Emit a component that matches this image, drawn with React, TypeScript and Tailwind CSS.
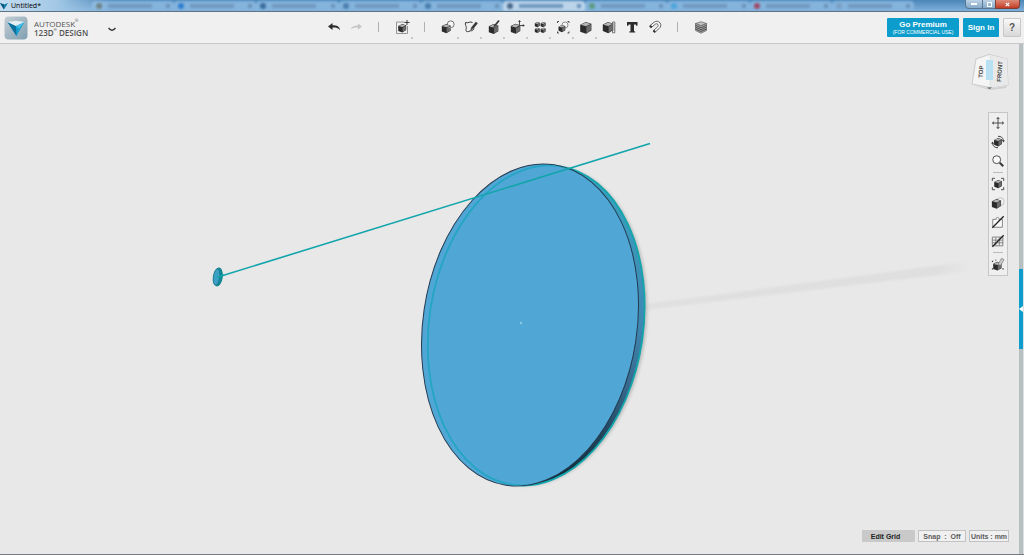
import React from 'react';

interface IconProps {
    children: React.ReactNode;
    size?: 'md' | 'sm';
}

const Icon: React.FC<IconProps> = ({ children, size = 'md' }) => (
    <svg viewBox="0 0 16 16" className={size === 'md' ? 'size-4 shrink-0' : 'size-3.5 shrink-0'} fill="none" stroke="#3a3a3a" aria-hidden="true">
        {children}
    </svg>
);

// Isometric box, about 10x10, with its top left corner at x, y
const Cube: React.FC<{ x: number; y: number; scale?: number }> = ({ x, y, scale = 1 }) => (
    <g transform={`translate(${x} ${y}) scale(${scale})`} stroke="none">
        <path d="M0 2.4 5 0l5 1.6v6L5.2 10.6 0 8.6z" fill="#2b2b2b" />
        <path d="M.5 2.5 5 .5l4.3 1.3-4.1 2z" fill="#b5b5b5" />
        <path d="M5.5 4.3 9.6 2.2v5.2l-4.1 2.6z" fill="#6b6b6b" />
    </g>
);

const icons = {
    undo: (
        <Icon>
            <path d="M2 7.5 6.5 4v2.2c4.5 0 7 1 7.5 5C12 8.7 9.5 8.5 6.5 8.600V11z" fill="#2d2d2d" stroke="none" />
        </Icon>
    ),
    redo: (
        <Icon>
            <path d="M14 7.5 10 4.5v2C6 6.500 3.500 7.500 3 10.5c1.500-1.700 4-2.200 7-2.100v2.300z" fill="#c6c6c6" stroke="none" />
        </Icon>
    ),
    insert: (
        <Icon>
            <path d="M10.500 3H2.500v11.500H13.500V7" stroke="#8a8a8a" strokeWidth=".9" />
            <Cube x={4.200} y={5} scale={0.8} />
            <path d="M13 1v5M10.500 3.500h5" strokeWidth="1" />
        </Icon>
    ),
    primitives: (
        <Icon>
            <circle cx="10.700" cy="5.300" r="3.400" fill="#f6f6f6" stroke="#666" strokeWidth=".9" />
            <Cube x={1.800} y={5} scale={0.88} />
            <path d="M7.500 6.300c.6 2 2.500 2.800 4 2.300" stroke="#bbb" strokeWidth=".8" />
        </Icon>
    ),
    sketch: (
        <Icon>
            <path d="M9.500 3.500C7 2 5.500 4.500 2.500 3.500c-.8 2.500 1 3.500.8 5 0 1.500-.8 2.500.2 4 1.500.8 3-.8 5-.8 1.500-.2 2-1 2.500-2.200" strokeWidth="1" />
            <path d="m9 9.500 4.800-6" strokeWidth="2.600" />
            <path d="m7.500 11.500.4-2.700 1.900 1.500z" fill="#3a3a3a" stroke="none" />
        </Icon>
    ),
    construct: (
        <Icon>
            <Cube x={2.800} y={5} scale={0.95} />
            <path d="m9 6.500 4-5" strokeWidth="1.800" />
            <path d="m7.500 8.300.6-2.800 1.900 1.500z" fill="#333" stroke="none" />
        </Icon>
    ),
    modify: (
        <Icon>
            <Cube x={1.800} y={4.800} scale={0.95} />
            <path d="M10.500 2v4.500H15M10.500 6.500 8 8.500" strokeWidth=".9" />
            <path d="m9 3 1.500-2L12 3zM13.800 5l2 1.500-2 1.500z" fill="#3a3a3a" stroke="none" />
        </Icon>
    ),
    pattern: (
        <Icon>
            <Cube x={2.800} y={3} scale={0.5} />
            <Cube x={8.600} y={3} scale={0.5} />
            <Cube x={2.800} y={8.800} scale={0.5} />
            <Cube x={8.600} y={8.800} scale={0.5} />
        </Icon>
    ),
    grouping: (
        <Icon>
            <circle cx="10" cy="6" r="3" fill="#f6f6f6" stroke="#777" strokeWidth=".8" />
            <Cube x={3.500} y={6} scale={0.68} />
            <path d="M2.500 4V2.500H4M12.500 2.500H14V4M2.500 12.500V14H4M12.500 14H14v-1.500" strokeWidth=".9" />
        </Icon>
    ),
    combine: (
        <Icon>
            <Cube x={2.200} y={3} scale={1.120} />
        </Icon>
    ),
    measure: (
        <Icon>
            <Cube x={1.800} y={3} scale={1.050} />
            <path d="M11.500 3h2.300v10.800h-2.300zM12 5h1.500M12 7h1.500M12 9h1.500M12 11h1.500" fill="#f3f3f3" stroke="#555" strokeWidth=".8" />
        </Icon>
    ),
    text: (
        <Icon>
            <path d="M3 3h10.500v3.800h-1.200l-.6-1.300H10v6.700l1.200.4v1H5.300v-1l1.200-.4V5.500H4.800l-.6 1.300H3z" fill="#2b2b2b" stroke="none" />
        </Icon>
    ),
    snap: (
        <Icon>
            <g stroke="#555" strokeWidth=".9">
                <path d="M2.500 7 7 3.300c2-1.600 4.700-1.300 6 .5 1.300 1.900 1 4.200-.8 5.700L7.500 13.700 6 12l4.500-4.100c1.800-1.700-.3-4.200-2.200-2.700L3.900 8.900z" fill="#f8f8f8" />
                <path d="m2.500 7 1.400 1.900 1.400-1.200L3.900 5.900zM6 12l1.500 1.700 1.300-1.200-1.500-1.700z" fill="#333" stroke="none" />
            </g>
        </Icon>
    ),
    material: (
        <Icon>
            <path d="M2.500 4.500 8 2.700l5.500 1.800L8 6.800z" fill="#c4c4c4" stroke="#666" strokeWidth=".7" />
            <path d="M2.500 4.500 8 6.800l5.500-2.300v7L8 14.300l-5.500-2.800z" fill="#a8a8a8" stroke="#555" strokeWidth=".6" />
            <path d="M2.500 6.300 8 8.800l5.500-2.500M2.500 8.200 8 10.700l5.500-2.500M2.500 10 8 12.500l5.500-2.500" stroke="#444" strokeWidth=".9" />
        </Icon>
    ),
    pan: (
        <Icon size="sm">
            <path d="M8 2v12M2 8h12M6.500 3.500 8 1.500l1.500 2M6.500 12.500 8 14.500l1.500-2M3.500 6.500 1.500 8l2 1.500M12.500 6.500l2 1.500-2 1.500" strokeWidth="1" />
        </Icon>
    ),
    orbit: (
        <Icon size="sm">
            <Cube x={3.500} y={3.500} scale={0.9} />
            <path d="M8 1.500c3.500-.3 5.800 1.700 6.200 5M8 14.500c-3.500.3-5.800-1.700-6.200-5" strokeWidth="1.100" />
            <path d="m12.300 6 1.900 2.500L15.800 6zM3.700 10 1.800 7.500.2 10z" fill="#3a3a3a" stroke="none" />
        </Icon>
    ),
    zoom: (
        <Icon size="sm">
            <circle cx="6.500" cy="6.500" r="4.500" fill="#fafafa" strokeWidth="1" />
            <path d="m10 10 4 4" strokeWidth="2.400" />
        </Icon>
    ),
    fit: (
        <Icon size="sm">
            <Cube x={3.700} y={3.500} scale={0.88} />
            <path d="M1.500 4.500v-3h3M11.500 1.500h3v3M1.500 11.500v3h3M11.500 14.500h3v-3" strokeWidth="1" />
        </Icon>
    ),
    shading: (
        <Icon size="sm">
            <circle cx="10.500" cy="6.500" r="4.500" fill="#f4f4f4" stroke="#aaa" strokeWidth=".8" />
            <Cube x={1} y={3.500} scale={1.050} />
        </Icon>
    ),
    hideSolids: (
        <Icon size="sm">
            <path d="M2 5h4c-1-3 4-3 3 0h4v9H2z" fill="#fafafa" stroke="#777" strokeWidth="1" />
            <path d="M1.500 14.500 14.500 1.500" stroke="#222" strokeWidth="1.500" />
        </Icon>
    ),
    hideSketches: (
        <Icon size="sm">
            <path d="M1.500 3.500h12v10h-12zM1.500 7h12M1.500 10h12M5.500 4v9M9.500 4v9" stroke="#777" strokeWidth="1" />
            <path d="M1.500 14.500 14.500 1.500" stroke="#222" strokeWidth="1.500" />
        </Icon>
    ),
    snapshot: (
        <Icon size="sm">
            <Cube x={2.500} y={5.500} scale={0.95} />
            <path d="m8 8.500 4-7L15 3l-4 6.500z" fill="#ccc" stroke="#777" strokeWidth=".8" />
            <path d="M1 5h1.500M5 3.500h1M1 13.500h1.500M13 13.500h1.500" strokeWidth="1.400" />
        </Icon>
    ),
};

type IconName = keyof typeof icons;

interface Tool {
    id: IconName;
    label: string;
    menu?: boolean;
}

const mainTools: Tool[] = [
    { id: 'primitives', label: 'Primitives', menu: true },
    { id: 'sketch', label: 'Sketch', menu: true },
    { id: 'construct', label: 'Construct', menu: true },
    { id: 'modify', label: 'Modify', menu: true },
    { id: 'pattern', label: 'Pattern', menu: true },
    { id: 'grouping', label: 'Grouping', menu: true },
    { id: 'combine', label: 'Combine', menu: true },
    { id: 'measure', label: 'Measure' },
    { id: 'text', label: 'Text' },
    { id: 'snap', label: 'Snap' },
];

const viewTools: Tool[][] = [
    [
        { id: 'pan', label: 'Pan' },
        { id: 'orbit', label: 'Orbit' },
        { id: 'zoom', label: 'Zoom' },
    ],
    [
        { id: 'fit', label: 'Fit' },
        { id: 'shading', label: 'Shading' },
        { id: 'hideSolids', label: 'Hide solids' },
        { id: 'hideSketches', label: 'Hide sketches' },
    ],
    [{ id: 'snapshot', label: 'Materials' }],
];

const browserTabs = [
    { icon: 'bg-[#5e6f6a]', active: false },
    { icon: 'bg-[#2f7fd0]', active: false },
    { icon: 'bg-[#3a6c9c]', active: false },
    { icon: 'bg-[#4a7fae]', active: false },
    { icon: 'bg-[#4a7fae]', active: false },
    { icon: 'bg-[#4d6a8c]', active: true },
    { icon: 'bg-[#5c9c84]', active: false },
    { icon: 'bg-[#4ba6dc]', active: false },
    { icon: 'bg-[#a04a68]', active: false },
    { icon: 'bg-[#7ba0c4]', active: false },
];

const ToolButton: React.FC<{ tool: Tool; className?: string }> = ({ tool, className = 'w-[23px]' }) => (
    <button type="button" aria-label={tool.label} className={`relative flex h-full items-center justify-center ${className}`}>
        {icons[tool.id]}
        {tool.menu && <span className="absolute right-0 bottom-0.5 size-0.5 bg-[#c8c8c8]" />}
    </button>
);

const Separator = () => (
    <div className="flex w-[23px] justify-center">
        <span className="h-2.5 w-px bg-[#b0b0b0]" />
    </div>
);

const TitleBar = () => (
    <div className="relative flex h-3 items-start overflow-hidden border-b border-[#5d7487] bg-linear-to-b from-[#4a86b8] to-[#7fb0da]">
        <div className="absolute inset-y-0 right-[110px] left-[92px] flex items-end blur-[1px]">
            {browserTabs.map((tab, index) => (
                <div
                    key={index}
                    className={`flex h-2.5 flex-1 items-center gap-1.5 rounded-t-sm px-1 ${tab.active ? 'bg-[#bcd4ea]' : 'bg-[#84b3dc]'}`}
                >
                    <span className={`size-1.5 rounded-full ${tab.icon}`} />
                    <span className="h-1 w-11 bg-[#7199bf]" />
                    <span className="ml-auto size-1 bg-[#6a94bb]" />
                </div>
            ))}
        </div>
        <div className="absolute inset-y-0 left-0 w-28 bg-linear-to-r from-[#c3dcf0] via-[#a3c8e6] to-transparent" />
        <div className="relative flex h-[11px] items-center gap-[3px]">
            <svg viewBox="0 0 8 8" className="size-2" aria-hidden="true">
                <path d="M0 1 4 2.500l4-1.500L4 7.500z" fill="#127fae" />
                <path d="M4 2.500v5L0 1z" fill="#0a5578" />
            </svg>
            <span className="text-[7px] leading-none text-black">Untitled*</span>
        </div>
        <div className="relative mr-1 ml-auto flex h-[9px] text-white">
            <button type="button" aria-label="Minimize" className="flex w-[18px] items-center justify-center rounded-bl-sm border border-t-0 border-[#5a7894] bg-linear-to-b from-[#bdd2e6] to-[#86a9c9]">
                <span className="h-0.5 w-1.5 bg-white" />
            </button>
            <button type="button" aria-label="Restore" className="flex w-3 items-center justify-center border-b border-[#5a7894] bg-linear-to-b from-[#bdd2e6] to-[#86a9c9]">
                <span className="size-[5px] border border-white" />
            </button>
            <button type="button" aria-label="Close" className="flex w-[25px] items-center justify-center rounded-br-sm border border-t-0 border-[#7a4038] bg-linear-to-b from-[#dc8a78] to-[#c33a24]">
                <svg viewBox="0 0 6 6" className="size-[5px]" stroke="white" strokeWidth="1.500" aria-hidden="true">
                    <path d="m1 1 4 4M5 1 1 5" />
                </svg>
            </button>
        </div>
    </div>
);

const Logo = () => (
    <svg viewBox="0 0 24 24" className="size-6" aria-hidden="true">
        <defs>
            <linearGradient id="logoBg" x1="0" y1="0" x2="1" y2="1">
                <stop offset="0" stopColor="#c4ced4" />
                <stop offset="1" stopColor="#7f9fb1" />
            </linearGradient>
        </defs>
        <rect x=".5" y=".5" width="23" height="23" rx="4" fill="url(#logoBg)" />
        <path d="M3.500 6 12 10l8.500-4L12.500 20z" fill="#18a0d2" />
        <path d="M3.500 6 12 10l.5 10z" fill="#0c6f9c" />
        <path d="M3.500 6 12 4.800 20.500 6 12 10z" fill="#e4eff4" />
        <path d="M12 10 20.500 6 15 12.500z" fill="#48bfe6" />
    </svg>
);

const Header = () => (
    <header className="flex h-8 items-center border-b border-[#c9c9c9] bg-[#f0f0f0] font-['Open_Sans',sans-serif]">
        <div className="flex w-[323px] items-center pl-1">
            <Logo />
            <div className="ml-1.5 text-[8px] leading-[9px] text-[#555]">
                <div className="flex items-start">
                    <span>AUTODESK</span>
                    <span className="text-[4px] leading-1">®</span>
                </div>
                <div className="flex items-start font-semibold">
                    <span>123D</span>
                    <span className="mr-0.5 text-[4px] leading-1">®</span>
                    <span>DESIGN</span>
                </div>
            </div>
            <button type="button" aria-label="Menu" className="ml-5 pt-1">
                <svg viewBox="0 0 8 5" className="h-[5px] w-2" fill="none" stroke="#333" strokeWidth="1.400" aria-hidden="true">
                    <path d="M.5 1 Q4 5.500 7.500 1" />
                </svg>
            </button>
        </div>
        <nav className="flex h-[29px] items-center self-start" aria-label="Tools">
            <ToolButton tool={{ id: 'undo', label: 'Undo' }} className="w-[22px]" />
            <ToolButton tool={{ id: 'redo', label: 'Redo' }} className="w-[22px]" />
            <Separator />
            <ToolButton tool={{ id: 'insert', label: 'Insert', menu: true }} />
            <Separator />
            {mainTools.map((tool) => (
                <ToolButton key={tool.id} tool={tool} />
            ))}
            <Separator />
            <ToolButton tool={{ id: 'material', label: 'Material' }} />
        </nav>
        <div className="mr-[3px] ml-auto flex h-[19px] gap-1 font-['Liberation_Sans',sans-serif] text-white">
            <button type="button" className="flex w-[72px] flex-col items-center justify-center rounded-[1px] bg-[#0c9dcc]">
                <span className="text-[8px] leading-[9px] font-bold">Go Premium</span>
                <span className="text-[5px] leading-[6px] whitespace-nowrap">(FOR COMMERCIAL USE)</span>
            </button>
            <button type="button" className="w-9 rounded-[1px] bg-[#0c9dcc] text-[8px] leading-none font-bold">
                Sign In
            </button>
            <button type="button" className="w-[18px] rounded-[1px] border border-[#c8c8c8] bg-linear-to-b from-[#f8f8f8] to-[#d8d8d8] text-[10px] leading-none font-bold text-[#555]">
                ?
            </button>
        </div>
    </header>
);

const Scene = () => (
    <svg viewBox="0 44 1019 510" preserveAspectRatio="xMidYMid slice" className="absolute inset-0 size-full" role="img" aria-label="3D model">
        <defs>
            <linearGradient id="rim" x1="0" y1="0" x2="0" y2="1">
                <stop offset="0" stopColor="#38a3c0" />
                <stop offset=".45" stopColor="#3f87b2" />
                <stop offset=".65" stopColor="#36688c" />
                <stop offset=".85" stopColor="#1c3c50" />
                <stop offset="1" stopColor="#0c2530" />
            </linearGradient>
            <linearGradient id="shadow" x1="0" y1="0" x2="1" y2="0">
                <stop offset="0" stopColor="#e0e0e0" />
                <stop offset=".9" stopColor="#dfdfdf" />
                <stop offset="1" stopColor="#e8e8e8" />
            </linearGradient>
            <filter id="soft">
                <feGaussianBlur stdDeviation="1.500" />
            </filter>
            <filter id="softer">
                <feGaussianBlur stdDeviation=".8" />
            </filter>
            <clipPath id="faceClip">
                <ellipse cx="530" cy="325" rx="106.500" ry="161.500" transform="rotate(8.500 530 325)" />
            </clipPath>
        </defs>
        <path d="M645 304 972 261v10L645 310z" fill="url(#shadow)" filter="url(#softer)" />
        <ellipse cx="538" cy="326" rx="108" ry="161" transform="rotate(8.500 538 326)" fill="#bdbdbd" filter="url(#soft)" />
        <ellipse cx="536.200" cy="325.500" rx="107" ry="161" transform="rotate(8.500 536.200 325.500)" fill="url(#rim)" stroke="#12a5ac" strokeWidth="1.800" />
        <ellipse cx="530" cy="325" rx="107" ry="162" transform="rotate(8.500 530 325)" fill="#50a7d5" stroke="#243a50" strokeWidth="1" />
        {/* far edge seen through the front face */}
        <g clipPath="url(#faceClip)">
            <ellipse cx="536.200" cy="325.500" rx="107" ry="161" transform="rotate(8.500 536.200 325.500)" fill="none" stroke="#25a5c4" strokeWidth="1.800" />
        </g>
        <path d="M218 277 650 143.500" stroke="#12a5ac" strokeWidth="1.600" />
        <ellipse cx="218" cy="277" rx="4.200" ry="9" transform="rotate(8 218 277)" fill="#0e8e9a" stroke="#14808c" strokeWidth="1" />
        <ellipse cx="216.500" cy="277" rx="3.200" ry="8.300" transform="rotate(8 216.500 277)" fill="#3ba0c4" stroke="#176d84" strokeWidth=".7" />
        <path d="M217 277.500 224 275" stroke="#12a5ac" strokeWidth="1.400" />
        <circle cx="521" cy="323" r="1.200" fill="#8cc8e6" />
    </svg>
);

const ViewCube = () => (
    <svg viewBox="0 0 40 38" className="absolute top-2 right-2.5 h-[38px] w-10 font-['Liberation_Sans',sans-serif]" role="img" aria-label="View cube">
        <path d="M3 33 21 36.500 38 34l-1 2-16 2z" fill="#cfcfcf" />
        <path d="M7 7 20 2.500 38 7l1 26-18 2.500L3 32z" fill="#f5f5f5" stroke="#c2c2c2" strokeWidth=".8" />
        <path d="M21 3 38 7l1 26-18 2.500z" fill="#e9e9e9" />
        <path d="M17 8h7v20h-7z" fill="#b4e1f4" />
        <path d="M21 3v32" stroke="#d0dde2" strokeWidth=".6" />
        <text transform="translate(13.500 26) rotate(-85)" fontSize="6" fontWeight="bold" fill="#444">TOP</text>
        <text transform="translate(32 30) rotate(-86)" fontSize="6" fontWeight="bold" fill="#444">FRONT</text>
        <path d="M18 35.500h5l-2.500 1.500z" fill="#555" />
    </svg>
);

const ViewToolbar = () => (
    <div className="absolute top-[68px] right-[11px] flex w-5 flex-col border border-[#c6c6c6] bg-[#efefef] pb-0.5" role="toolbar" aria-label="View">
        {viewTools.map((group, index) => (
            <React.Fragment key={index}>
                {index > 0 && (
                    <div className="flex h-1 items-center justify-center">
                        <span className="h-px w-2.5 bg-[#bbb]" />
                    </div>
                )}
                {group.map((tool) => (
                    <div key={tool.id} className="flex h-[19px] justify-center">
                        <ToolButton tool={tool} className="w-full" />
                    </div>
                ))}
            </React.Fragment>
        ))}
    </div>
);

const StatusBar = () => (
    <div className="absolute right-2.5 bottom-3 flex h-3 gap-[3px] font-['Liberation_Sans',sans-serif] text-[7px] leading-none font-bold whitespace-pre text-[#5c5c5c]">
        <button type="button" className="w-[53px] rounded-[1px] bg-[#c9c9c9] pr-1.5 text-[#222]">
            Edit Grid
        </button>
        <button type="button" className="w-12 border border-[#c2c2c2] bg-[#f0f0f0]">
            {'Snap  :  Off'}
        </button>
        <button type="button" className="w-10 border border-[#c2c2c2] bg-[#f0f0f0]">
            Units : mm
        </button>
    </div>
);

const App: React.FC = () => {
    return (
        <div className="flex h-screen flex-col overflow-hidden bg-[#e8e8e8] font-['Open_Sans',sans-serif]">
            <TitleBar />
            <Header />
            <div className="flex min-h-0 flex-1 border-b border-[#747b82]">
                <main className="relative flex-1">
                    <Scene />
                    <ViewCube />
                    <ViewToolbar />
                    <StatusBar />
                </main>
                <aside className="flex w-[5px] flex-col justify-center border-r border-[#dce2e4] bg-[#b7bfc1] pt-5">
                    <button type="button" aria-label="Open parts panel" className="flex h-20 w-full items-center bg-[#0c9dcc]">
                        <svg viewBox="0 0 4 6" className="h-1.5 w-1" aria-hidden="true">
                            <path d="M4 0v6L0 3z" fill="white" />
                        </svg>
                    </button>
                </aside>
            </div>
        </div>
    );
};

export default App;
